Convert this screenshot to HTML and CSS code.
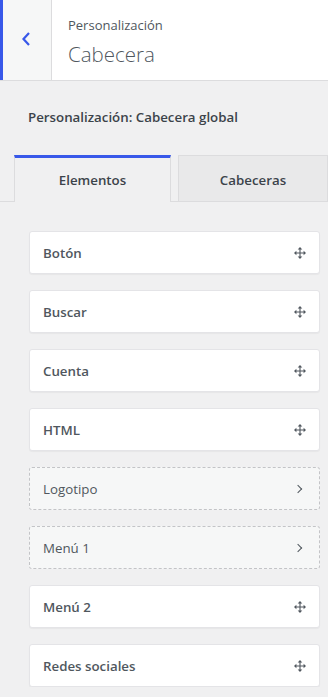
FILE: index.html
```html
<!doctype html>
<html lang="es">
<head>
    <meta charset="utf-8">
    <title>Personalización - Cabecera</title>
    <link rel="stylesheet" href="styles.css">
</head>
<body>
<div class="header">
    <button class="back" type="button" aria-label="Volver">
        <svg width="12" height="16" viewBox="0 0 12 16"><path d="M9 2 L3.5 8 L9 14" fill="none" stroke="#3858e9" stroke-width="2.2"/></svg>
    </button>
    <div class="titles">
        <span class="sub">Personalización</span>
        <h2>Cabecera</h2>
    </div>
</div>

<div class="panel">
    <h3 class="section-title">Personalización: Cabecera global</h3>

    <div class="tabs">
        <div class="tab active">Elementos</div>
        <div class="tab">Cabeceras</div>
    </div>

    <ul class="items">
        <li class="item">Botón <svg class="move" viewBox="0 0 13 13"><use href="#move"/></svg></li>
        <li class="item">Buscar <svg class="move" viewBox="0 0 13 13"><use href="#move"/></svg></li>
        <li class="item">Cuenta <svg class="move" viewBox="0 0 13 13"><use href="#move"/></svg></li>
        <li class="item">HTML <svg class="move" viewBox="0 0 13 13"><use href="#move"/></svg></li>
        <li class="item dashed">Logotipo <span class="arrow"></span></li>
        <li class="item dashed">Menú 1 <span class="arrow"></span></li>
        <li class="item">Menú 2 <svg class="move" viewBox="0 0 13 13"><use href="#move"/></svg></li>
        <li class="item">Redes sociales <svg class="move" viewBox="0 0 13 13"><use href="#move"/></svg></li>
    </ul>
</div>

<svg width="0" height="0" style="position:absolute">
    <symbol id="move" viewBox="0 0 13 13">
        <path d="M6.5 2 V11 M2 6.5 H11" stroke="#50575e" stroke-width="1.2" fill="none"/>
        <path d="M6.5 0 L9 2.6 H4 Z M6.5 13 L9 10.4 H4 Z M0 6.5 L2.6 4 V9 Z M13 6.5 L10.4 4 V9 Z" fill="#50575e"/>
    </symbol>
</svg>
</body>
</html>
```

FILE: styles.css
```css
* {
    box-sizing: border-box;
}
body {
    margin: 0;
    background: #f0f0f1;
    font-family: "Open Sans", "Noto Sans", sans-serif;
    color: #50575e;
}

/* header */
.header {
    display: flex;
    height: 81px;
    background: #fff;
    border-bottom: 1px solid #dcdcde;
}
.back {
    width: 52px;
    padding: 0;
    border: 0;
    border-left: 3px solid #3858e9;
    border-right: 1px solid #dcdcde;
    background: #f6f7f7;
    display: flex;
    align-items: center;
    justify-content: center;
}
.back svg {
    margin-left: -3px;
    margin-top: -2px;
}
.titles {
    padding: 15px 0 0 16px;
}
.sub {
    display: block;
    font-size: 13px;
    line-height: 20px;
}
.titles h2 {
    margin: 5px 0 0;
    font-size: 20.5px;
    font-weight: 300;
    line-height: 28px;
}

/* section */
.section-title {
    margin: 0;
    padding: 27px 0 0 28px;
    height: 74px;
    font-size: 13.3px;
    font-weight: 600;
    color: #3c434a;
}
.tabs {
    display: flex;
    gap: 7px;
    padding-left: 14px;
    border-bottom: 1px solid #dcdcde;
    height: 47px;
}
.tab {
    flex: 1;
    display: flex;
    align-items: center;
    justify-content: center;
    font-size: 13.3px;
    font-weight: 600;
    color: #3c434a;
    border: 1px solid #dcdcde;
    border-bottom: 0;
    background: #e9e9ea;
    padding-top: 2px;
}
.tab.active {
    flex: 0 0 157px;
    background: #f0f0f1;
    border-top: 3px solid #3858e9;
    margin-bottom: -1px;
    padding-top: 0;
}

/* items */
.items {
    list-style: none;
    margin: 0;
    padding: 29px 8px 0 29px;
    display: flex;
    flex-direction: column;
    gap: 16px;
}
.item {
    height: 43px;
    display: flex;
    align-items: center;
    justify-content: space-between;
    padding: 0 13px 0 13px;
    background: #fff;
    border: 1px solid #e4e4e7;
    border-radius: 3px;
    box-shadow: 0 1px 1px rgba(0, 0, 0, 0.04);
    font-size: 13.3px;
    font-weight: 600;
    color: #50575e;
}
.item.dashed {
    background: #f6f7f7;
    border: 1px dashed #c3c4c7;
    box-shadow: none;
    font-weight: 400;
}
.move {
    width: 12px;
    height: 12px;
}
.arrow {
    width: 6px;
    height: 6px;
    border-top: 1.5px solid #50575e;
    border-right: 1.5px solid #50575e;
    transform: rotate(45deg);
    margin-right: 5px;
}
```
